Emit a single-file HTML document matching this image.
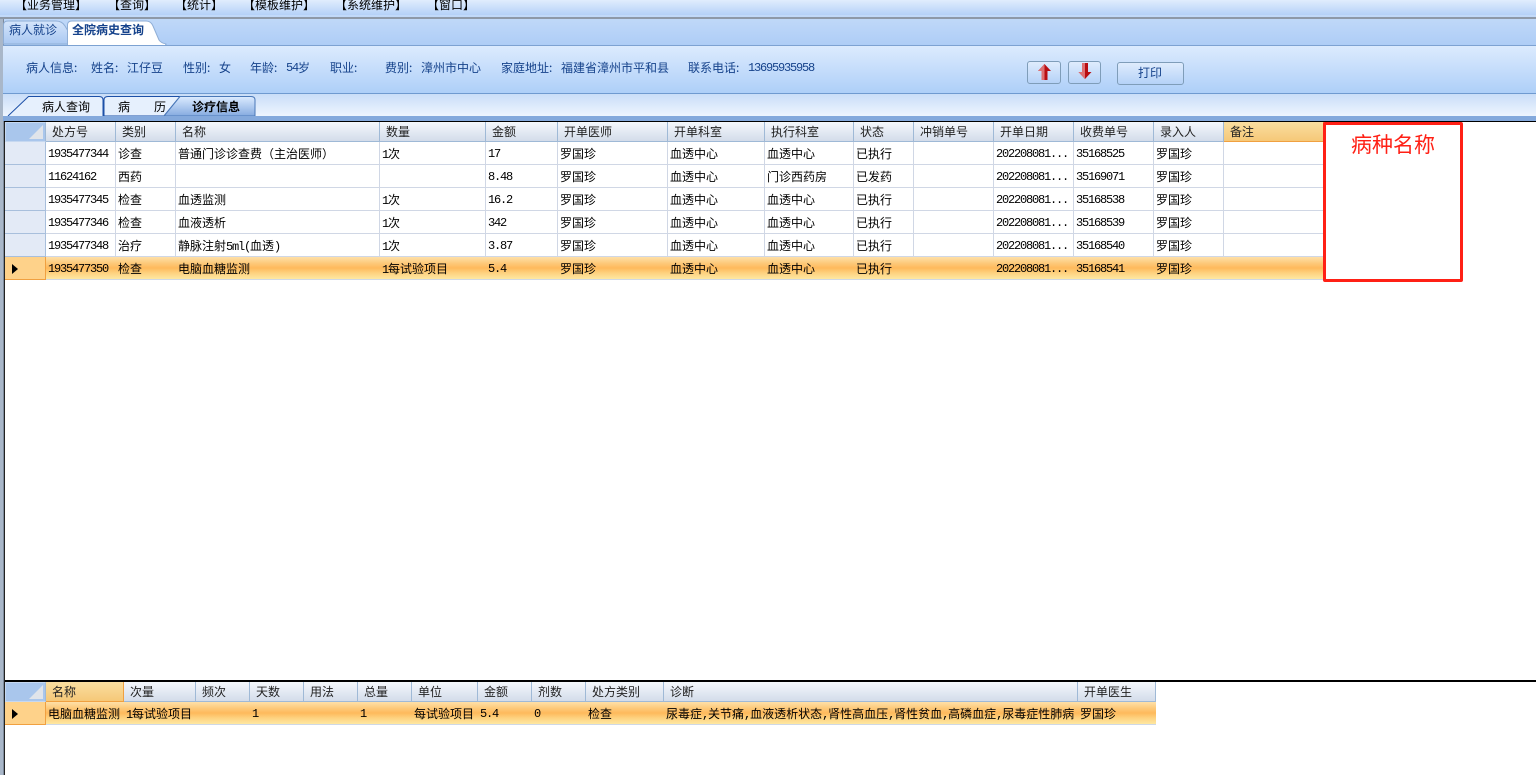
<!DOCTYPE html>
<html lang="zh">
<head>
<meta charset="utf-8">
<title>全院病史查询</title>
<style>
html,body{margin:0;padding:0;background:#fff;}
body{width:1536px;height:775px;position:relative;overflow:hidden;font:12px/16px "WenQuanYi Zen Hei","Noto Sans CJK SC",sans-serif;color:#000;}
.a{position:absolute;}
.t{position:absolute;white-space:nowrap;}
.m{font-family:"Liberation Mono",monospace;font-size:12px;letter-spacing:-1.2px;line-height:1;}
.menu{left:0;top:0;width:1536px;height:15px;background:linear-gradient(#e0edfd,#b5d1f8);}
.menu .t{top:-3px;color:#000;}
.strip{left:0;top:15px;width:1536px;height:30px;background:linear-gradient(#c2daf9,#aecdf6);}
.panel{left:3px;top:45px;width:1533px;background:linear-gradient(#dcebfe,#aecff8);border-top:1px solid #7da2d2;border-bottom:1px solid #6f9ad0;box-sizing:border-box;height:49px;}
.panel .t{color:#15428b;top:14px;}
.tabs2{left:3px;top:94px;width:1533px;height:22px;background:linear-gradient(#c9ddf8,#eef5fe);}
.bar{left:3px;top:116px;width:1533px;height:5px;background:#84a9dc;}
.btn{box-sizing:border-box;border:1px solid #7f9db9;border-radius:3px;background:linear-gradient(#dfecfd,#b5d2f7);}
table{position:absolute;border-collapse:separate;border-spacing:0;table-layout:fixed;background:#fff;}
td,th{padding:0;overflow:hidden;white-space:nowrap;font-weight:normal;text-align:left;box-sizing:border-box;}
th{height:20px;padding-left:6px;background:linear-gradient(#f5f8fc,#d3dcea);border-right:1px solid #9fb9d6;border-bottom:1px solid #9fb9d6;color:#222;line-height:18px;}
th.corner{padding:0;background:#a9c6ec;border:1px solid #c6d8f0;border-right:1px solid #9fb9d6;position:relative;}
th.corner i{position:absolute;right:2px;bottom:2px;width:0;height:0;border-left:14px solid transparent;border-bottom:14px solid #e0e4ea;}
th.sel{background:linear-gradient(#f9dea0,#f6c878);border-right:1px solid #f0a040;border-bottom:1px solid #f0a040;}
td{height:23px;padding:2px 0 0 2px;border-right:1px solid #d0d7e5;border-bottom:1px solid #d0d7e5;line-height:20px;vertical-align:top;}
td.rh{padding:0;background:#e3eaf6;border-right:1px solid #a8bfdc;border-bottom:1px solid #a8bfdc;position:relative;}
td.n{font-family:"Liberation Mono",monospace;font-size:12px;letter-spacing:-1.2px;}
tr.s td{background:linear-gradient(#fee0a8 0%,#fdc877 30%,#feb95c 50%,#fed17e 72%,#fee8a2 100%);border-right:none;border-bottom:1px solid #cfd8e5;}
tr.s td.rh{background:#fed28a;border-right:1px solid #f0a040;border-bottom:1px solid #f0a040;}
tr.s td.rh i{position:absolute;left:7px;top:7px;width:0;height:0;border-left:6px solid #000;border-top:5px solid transparent;border-bottom:5px solid transparent;}
</style>
</head>
<body>

<div class="a menu">
<span class="t" style="left:15px;">【业务管理】</span>
<span class="t" style="left:108px;">【查询】</span>
<span class="t" style="left:175px;">【统计】</span>
<span class="t" style="left:243px;">【模板维护】</span>
<span class="t" style="left:335px;">【系统维护】</span>
<span class="t" style="left:427px;">【窗口】</span>
</div>

<div class="a strip"></div>
<div class="a" style="left:0;top:17px;width:1536px;height:2px;background:#8e99a8;"></div>
<div class="a" style="left:0;top:19px;width:3px;height:756px;background:#a9b7c9;"></div>
<div class="a" style="left:3px;top:19px;width:1px;height:756px;background:#7e8b9c;"></div>

<svg class="a" style="left:0;top:18px;" width="170" height="28">
<defs><linearGradient id="g1" x1="0" y1="0" x2="0" y2="1"><stop offset="0" stop-color="#d5e5fb"/><stop offset="1" stop-color="#a9c8f2"/></linearGradient></defs>
<path d="M3.5 26V7Q3.5 3 8 3H56Q62 3 65 8L68 13V26Z" fill="url(#g1)" stroke="#8faed6"/>
<path d="M67.5 27V7Q67.5 3 72 3H146Q151 3 153 8L159 22Q161 25 166 26V27Z" fill="#fff" stroke="#8faed6"/>
<path d="M68 26H165V28H68Z" fill="#fff"/>
</svg>
<span class="t" style="left:9px;top:22px;color:#15428b;">病人就诊</span>
<span class="t" style="left:72px;top:22px;color:#15428b;font-weight:bold;">全院病史查询</span>

<div class="a panel">
<span class="t" style="left:23px;">病人信息:</span>
<span class="t" style="left:88px;">姓名:</span>
<span class="t" style="left:124px;">江仔豆</span>
<span class="t" style="left:180px;">性别:</span>
<span class="t" style="left:216px;">女</span>
<span class="t" style="left:247px;">年龄:</span>
<span class="t m" style="left:283px;line-height:16px;">54</span>
<span class="t" style="left:295px;">岁</span>
<span class="t" style="left:327px;">职业:</span>
<span class="t" style="left:382px;">费别:</span>
<span class="t" style="left:418px;">漳州市中心</span>
<span class="t" style="left:498px;">家庭地址:</span>
<span class="t" style="left:558px;">福建省漳州市平和县</span>
<span class="t" style="left:685px;">联系电话:</span>
<span class="t m" style="left:745px;line-height:16px;">13695935958</span>
</div>

<div class="a btn" style="left:1027px;top:61px;width:34px;height:23px;"></div>
<svg class="a" style="left:1037px;top:63px;" width="16" height="18"><path d="M7.500 1L14 8H10.500V17H4.500V8H1Z" fill="#b80d12"/><path d="M7.500 1L1 8H4.500V17H7.500Z" fill="#de6f72"/></svg>
<div class="a btn" style="left:1068px;top:61px;width:33px;height:23px;"></div>
<svg class="a" style="left:1077px;top:62px;" width="16" height="18"><path d="M5 1H11V10H14.500L8 17L1.500 10H5Z" fill="#b80d12"/><path d="M5 1H8V17L1.500 10H5Z" fill="#de6f72"/></svg>
<div class="a btn" style="left:1117px;top:62px;width:67px;height:23px;"></div>
<span class="t" style="left:1138px;top:65px;color:#15428b;">打印</span>

<div class="a tabs2"></div>
<svg class="a" style="left:0;top:94px;" width="262" height="24">
<defs><linearGradient id="g2" x1="0" y1="0" x2="0" y2="1"><stop offset="0" stop-color="#dcebff"/><stop offset="1" stop-color="#86abe0"/></linearGradient></defs>
<path d="M8 22L28.500 2.500H99Q103 2.500 103 6V22" fill="#e6f0fd" stroke="#1c50a8"/>
<path d="M104 22V6Q104 2.500 108 2.500H180L164 22Z" fill="#e6f0fd" stroke="#1c50a8"/>
<path d="M164 22L180 2.500H251Q255 2.500 255 6V22Z" fill="url(#g2)" stroke="#4a78b8"/>
</svg>
<span class="t" style="left:42px;top:99px;">病人查询</span>
<span class="t" style="left:118px;top:99px;">病</span>
<span class="t" style="left:154px;top:99px;">历</span>
<span class="t" style="left:192px;top:99px;font-weight:bold;">诊疗信息</span>

<div class="a bar"></div>
<div class="a" style="left:4px;top:121px;width:1532px;height:1px;background:#000;"></div>
<div class="a" style="left:4px;top:122px;width:1px;height:653px;background:#222;"></div>

<table style="left:5px;top:122px;width:1319px;">
<colgroup><col style="width:41px"><col style="width:70px"><col style="width:60px"><col style="width:204px"><col style="width:106px"><col style="width:72px"><col style="width:110px"><col style="width:97px"><col style="width:89px"><col style="width:60px"><col style="width:80px"><col style="width:80px"><col style="width:80px"><col style="width:70px"><col style="width:100px"></colgroup>
<tr><th class="corner"><i></i></th><th>处方号</th><th>类别</th><th>名称</th><th>数量</th><th>金额</th><th>开单医师</th><th>开单科室</th><th>执行科室</th><th>状态</th><th>冲销单号</th><th>开单日期</th><th>收费单号</th><th>录入人</th><th class="sel">备注</th></tr>
<tr><td class="rh"></td><td class="n">1935477344</td><td>诊查</td><td>普通门诊诊查费（主治医师）</td><td><span class="m">1</span>次</td><td class="n">17</td><td>罗国珍</td><td>血透中心</td><td>血透中心</td><td>已执行</td><td></td><td class="n">202208081...</td><td class="n">35168525</td><td>罗国珍</td><td></td></tr>
<tr><td class="rh"></td><td class="n">11624162</td><td>西药</td><td></td><td></td><td class="n">8.48</td><td>罗国珍</td><td>血透中心</td><td>门诊西药房</td><td>已发药</td><td></td><td class="n">202208081...</td><td class="n">35169071</td><td>罗国珍</td><td></td></tr>
<tr><td class="rh"></td><td class="n">1935477345</td><td>检查</td><td>血透监测</td><td><span class="m">1</span>次</td><td class="n">16.2</td><td>罗国珍</td><td>血透中心</td><td>血透中心</td><td>已执行</td><td></td><td class="n">202208081...</td><td class="n">35168538</td><td>罗国珍</td><td></td></tr>
<tr><td class="rh"></td><td class="n">1935477346</td><td>检查</td><td>血液透析</td><td><span class="m">1</span>次</td><td class="n">342</td><td>罗国珍</td><td>血透中心</td><td>血透中心</td><td>已执行</td><td></td><td class="n">202208081...</td><td class="n">35168539</td><td>罗国珍</td><td></td></tr>
<tr><td class="rh"></td><td class="n">1935477348</td><td>治疗</td><td>静脉注射<span class="m">5ml(</span>血透<span class="m">)</span></td><td><span class="m">1</span>次</td><td class="n">3.87</td><td>罗国珍</td><td>血透中心</td><td>血透中心</td><td>已执行</td><td></td><td class="n">202208081...</td><td class="n">35168540</td><td>罗国珍</td><td></td></tr>
<tr class="s"><td class="rh"><i></i></td><td class="n">1935477350</td><td>检查</td><td>电脑血糖监测</td><td><span class="m">1</span>每试验项目</td><td class="n">5.4</td><td>罗国珍</td><td>血透中心</td><td>血透中心</td><td>已执行</td><td></td><td class="n">202208081...</td><td class="n">35168541</td><td>罗国珍</td><td></td></tr>
</table>

<div class="a" style="left:1323px;top:122px;width:140px;height:160px;box-sizing:border-box;border:3px solid #ff2015;border-radius:2px;background:#fff;"></div>
<span class="t" style="left:1351px;top:130px;font-size:21px;line-height:28px;color:#ff2015;">病种名称</span>

<div class="a" style="left:5px;top:680px;width:1531px;height:2px;background:#000;"></div>

<table style="left:5px;top:682px;width:1151px;">
<colgroup><col style="width:41px"><col style="width:78px"><col style="width:72px"><col style="width:54px"><col style="width:54px"><col style="width:54px"><col style="width:54px"><col style="width:66px"><col style="width:54px"><col style="width:54px"><col style="width:78px"><col style="width:414px"><col style="width:78px"></colgroup>
<tr><th class="corner"><i></i></th><th class="sel">名称</th><th>次量</th><th>频次</th><th>天数</th><th>用法</th><th>总量</th><th>单位</th><th>金额</th><th>剂数</th><th>处方类别</th><th>诊断</th><th>开单医生</th></tr>
<tr class="s"><td class="rh"><i></i></td><td>电脑血糖监测</td><td><span class="m">1</span>每试验项目</td><td></td><td class="n">1</td><td></td><td class="n">1</td><td>每试验项目</td><td class="n">5.4</td><td class="n">0</td><td>检查</td><td>尿毒症<span class="m">,</span>关节痛<span class="m">,</span>血液透析状态<span class="m">,</span>肾性高血压<span class="m">,</span>肾性贫血<span class="m">,</span>高磷血症<span class="m">,</span>尿毒症性肺病</td><td>罗国珍</td></tr>
</table>

</body>
</html>
